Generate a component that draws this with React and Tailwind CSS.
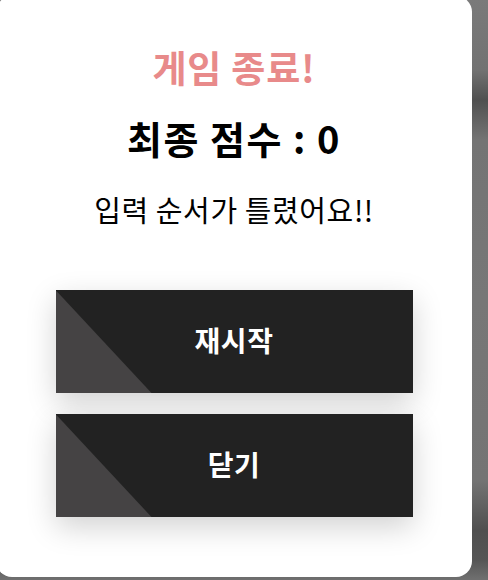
import React from 'react'

const FONT = "font-['Noto_Sans_CJK_KR','Noto_Sans',sans-serif]"

const GameButton = ({ label }) => (
  <button
    type="button"
    className="relative h-[103px] w-[357px] overflow-hidden bg-[#222222] shadow-[0_10px_28px_rgba(0,0,0,0.18)]"
  >
    {/* 왼쪽 아래 삼각형 장식 */}
    <span className="absolute inset-y-0 left-0 w-[96px] bg-[#454344] [clip-path:polygon(0_0,0_100%,100%_100%)]" />
    <span className="relative text-[28px] font-bold leading-none tracking-[0.5px] text-white">{label}</span>
  </button>
)

export default function App() {
  return (
    <div
      className={`h-[580px] w-[488px] overflow-hidden bg-[linear-gradient(180deg,#7a7a7a_0px,#727272_70px,#505050_100px,#747474_140px,#777777_300px,#747474_480px,#4f4f4f_530px,#555555_560px,#707070_580px)] ${FONT}`}
    >
      <div className="-ml-[4px] -mt-[4px] flex h-[581px] w-[476px] flex-col items-center rounded-2xl bg-white pt-[51px]">
        <h2 className="h-[40px] text-[37px] font-bold leading-[40px] tracking-[0.8px] text-[#e88a8a]">게임 종료!</h2>
        <p className="mt-[31px] h-[40px] text-[38px] font-bold leading-[40px] tracking-[1.5px] text-black">최종 점수 : 0</p>
        <p className="mt-[33px] h-[36px] text-[29px] leading-[36px] tracking-[0.6px] text-black">입력 순서가 틀렸어요!!</p>

        <div className="mt-[63px] flex flex-col gap-[21px]">
          <GameButton label="재시작" />
          <GameButton label="닫기" />
        </div>
      </div>
    </div>
  )
}
